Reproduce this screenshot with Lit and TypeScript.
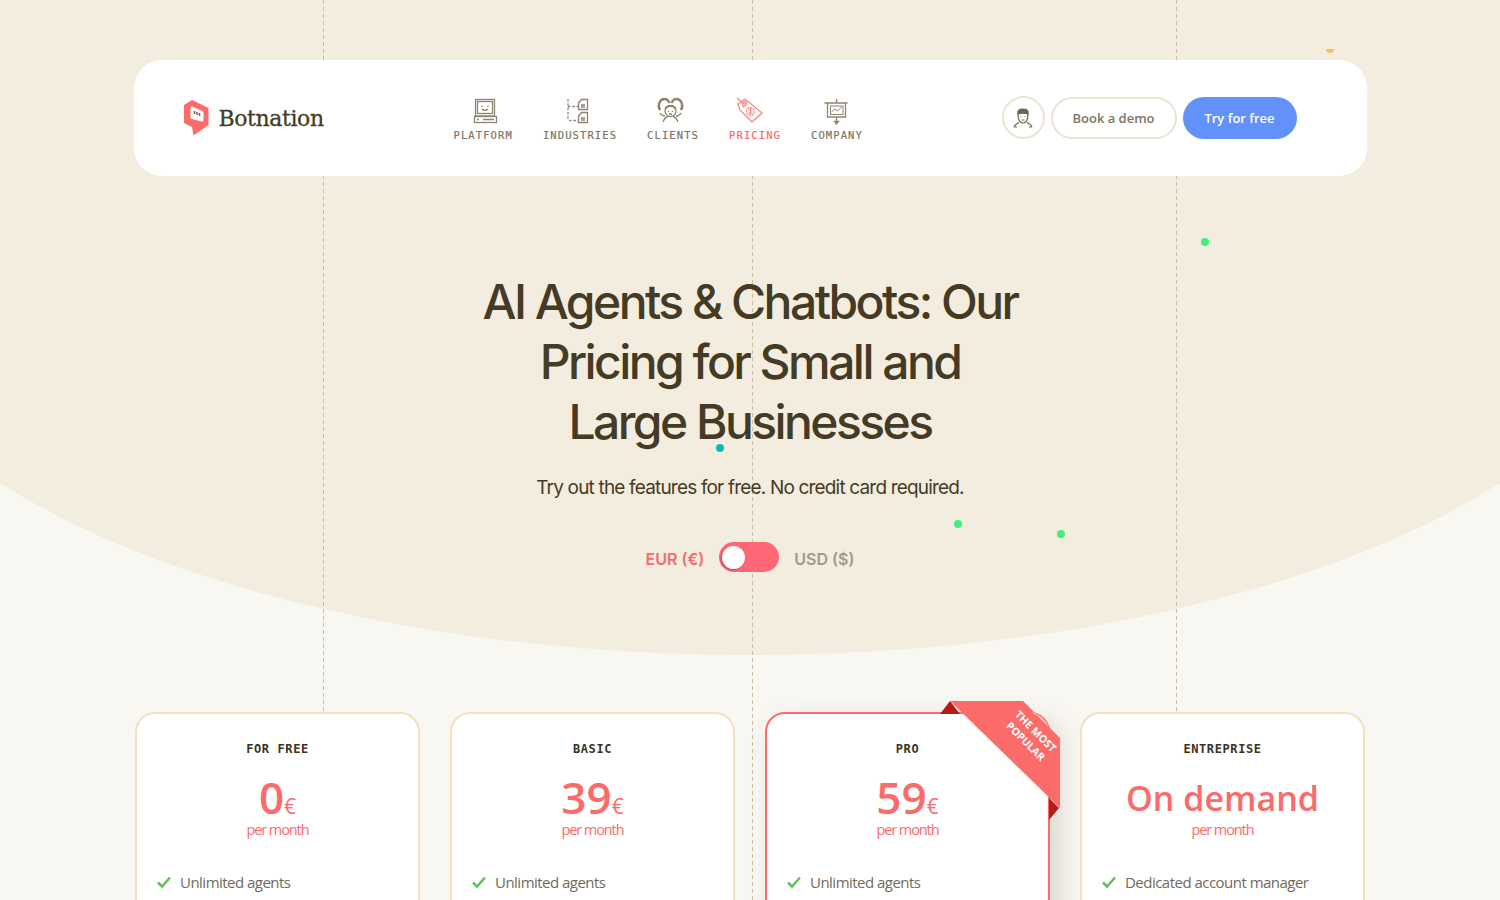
import { LitElement, html, css, svg } from "lit";
import { customElement } from "lit/decorators.js";

const navIcons: Record<string, unknown> = {
  platform: svg`<rect x="8.500" y="3.500" width="19" height="16.500"/><rect x="10.500" y="5.500" width="15" height="12"/><path d="M15 9.500v1.500M21 9.500v1.500M15 13c1.500 1.800 4.500 1.800 6 0"/><rect x="7.500" y="20.500" width="22" height="6"/><path d="M10 23.500h2M16 23.500h11"/>`,
  industries: svg`<path stroke-dasharray="2.500 1.800" d="M4 3v19c0 1.500 1 2.500 2.500 2.500h7.500M4 10.500h10"/><path d="M14.500 7l3-3.500h6v10h-9zM14.500 20l3-3.500h6v10h-9z"/><path d="M17 9h4M17 11h4M17 22h4M17 24h4"/>`,
  clients: svg`<path d="M3 14c-3-5 0-11 4.500-11 2.500 0 4 1.500 5 4" stroke-width="2.400"/><path d="M24 14c3-5 0-11-4.500-11-2.500 0-4 1.500-5 4" stroke-width="2.400"/><path d="M8 20c-2 0-4-1-5-3M19 20c2 0 4-1 5-3"/><circle cx="13.500" cy="15" r="5.500" fill="#fff"/><path d="M8.500 13c1-4 9-4 10 0" stroke-width="2"/><path d="M11.500 15v1M15.500 15v1M12 18h3M6 26c1-3 3-5 5-5.500M21 26c-1-3-3-5-5-5.500"/>`,
  pricing: svg`<path d="M-1 8l7-5 17 14-10 9L1 14z"/><path d="M2 6l5-3.500 2 6-5 4z" fill="#f9a9a9" stroke="none"/><path d="M-2 2l7 6"/><circle cx="11.500" cy="15.500" r="4" stroke-dasharray="2 1"/><path d="M11.500 12v7M9.500 14h4M9.500 17h4" stroke-width="1"/>`,
  company: svg`<path d="M3.500 7h23M15.500 3v4M6.500 7v14h18V7M15.500 21v6"/><path d="M13.500 25.500h4l-2 2.500z"/><rect x="9.500" y="10" width="12.500" height="8.500" stroke-width="1"/><path d="M10.500 16l3.500-3 2.500 2 4-4" stroke-width="1"/>`,
};

const NAV = [
  ["PLATFORM", "platform"],
  ["INDUSTRIES", "industries"],
  ["CLIENTS", "clients"],
  ["PRICING", "pricing"],
  ["COMPANY", "company"],
];

const PLANS = [
  { name: "FOR FREE", price: "0", cur: "€", feat: "Unlimited agents", pro: false },
  { name: "BASIC", price: "39", cur: "€", feat: "Unlimited agents", pro: false },
  { name: "PRO", price: "59", cur: "€", feat: "Unlimited agents", pro: true },
  { name: "ENTREPRISE", price: "On demand", cur: "", feat: "Dedicated account manager", pro: false },
];

const DOTS = [
  { x: 1205, y: 242, c: "#44ee7c" },
  { x: 958, y: 524, c: "#44ee7c" },
  { x: 1061, y: 534, c: "#44ee7c" },
  { x: 720, y: 448, c: "#10b7b7" },
];

@customElement("app-root")
export class AppRoot extends LitElement {
  static styles = css`
    :host {
      display: block;
      position: relative;
      height: 900px;
      overflow: hidden;
      background: #f9f7f2;
      font-family: "Open Sans", sans-serif;
      color: #463c26;
    }
    .top {
      position: absolute;
      left: 0;
      top: 0;
      width: 100%;
      height: 483px;
      background: #f3eddf;
    }
    .ellipse {
      position: absolute;
      left: -150px;
      top: -115px;
      width: 1800px;
      height: 770px;
      border-radius: 50%;
      background: #f3eddf;
    }
    .vline {
      position: absolute;
      top: 0;
      width: 1px;
      background: repeating-linear-gradient(to bottom, #cabfa6 0 4px, transparent 4px 7px);
    }
    .l1 { left: 323px; height: 712px; }
    .l2 { left: 752px; height: 900px; }
    .l3 { left: 1176px; height: 712px; }
    .dot {
      position: absolute;
      width: 8px;
      height: 8px;
      border-radius: 50%;
    }
    .half {
      position: absolute;
      left: 1326px;
      top: 49px;
      width: 8px;
      height: 4px;
      border-radius: 0 0 4px 4px;
      background: #f5c04a;
    }
    .content {
      position: relative;
      display: flex;
      flex-direction: column;
      align-items: center;
    }
    header {
      margin-top: 60px;
      width: 1233px;
      height: 116px;
      box-sizing: border-box;
      padding: 0 70px 0 50px;
      background: #fff;
      border-radius: 28px;
      display: flex;
      align-items: center;
    }
    .logo {
      width: 270px;
      display: flex;
      align-items: center;
      gap: 10px;
    }
    .logo span {
      font-family: "DejaVu Serif", serif;
      font-size: 22px;
      letter-spacing: -0.400px;
      -webkit-text-stroke: 0.300px #463c26;
      color: #463c26;
    }
    nav {
      display: flex;
      gap: 30px;
    }
    .item {
      display: flex;
      flex-direction: column;
      align-items: center;
      gap: 1px;
      font-family: "DejaVu Sans Mono", monospace;
      font-size: 10.500px;
      letter-spacing: 1.100px;
      -webkit-text-stroke: 0.200px currentColor;
      color: #7d7663;
    }
    .item svg {
      width: 32px;
      height: 32px;
      overflow: visible;
      fill: none;
      stroke: #8d8570;
      stroke-width: 1.300;
    }
    .item.active {
      color: #f7696d;
    }
    .item.active svg {
      stroke: #f7898b;
    }
    .actions {
      margin-left: auto;
      display: flex;
      align-items: center;
      gap: 6px;
    }
    .avatar {
      width: 43px;
      height: 43px;
      margin-top: -1px;
      box-sizing: border-box;
      border: 2px solid #ebe4d2;
      border-radius: 50%;
      display: flex;
      align-items: center;
      justify-content: center;
    }
    .avatar svg {
      width: 20px;
      height: 20px;
      fill: none;
      stroke: #6c6655;
      stroke-width: 1.200;
    }
    .btn {
      height: 42px;
      box-sizing: border-box;
      border-radius: 21px;
      display: flex;
      align-items: center;
      justify-content: center;
      font-size: 13px;
      font-weight: 600;
    }
    .ghost {
      width: 126px;
      border: 2px solid #ebe4d2;
      color: #7d7663;
    }
    .primary {
      width: 114px;
      background: #6292f9;
      color: #fff;
    }
    h1 {
      margin: 96px 0 0;
      width: 600px;
      text-align: center;
      font-family: Inter, sans-serif;
      font-size: 48px;
      line-height: 60px;
      font-weight: 500;
      letter-spacing: -2.550px;
      color: #453b25;
    }
    .sub {
      margin: 21px 0 0;
      font-family: Inter, sans-serif;
      font-size: 19px;
      line-height: 30px;
      letter-spacing: -0.820px;
      color: #453b25;
    }
    .toggle-row {
      margin-top: 39px;
      display: flex;
      align-items: center;
      gap: 15px;
      font-family: Inter, sans-serif;
      font-size: 16px;
      font-weight: 600;
      color: #a09a8c;
    }
    .toggle-row span {
      padding-top: 4px;
    }
    .toggle-row .on {
      color: #f7696d;
    }
    .switch {
      width: 60px;
      height: 30px;
      border-radius: 15px;
      background: #ff6676;
      display: flex;
      align-items: center;
      padding-left: 3px;
      box-sizing: border-box;
    }
    .knob {
      width: 23px;
      height: 23px;
      border-radius: 50%;
      background: #fff;
      box-shadow: -1px 1px 2px rgba(150, 40, 60, 0.5);
    }
    .cards {
      margin-top: 140px;
      display: grid;
      grid-template-columns: repeat(4, 285px);
      gap: 30px;
    }
    .card {
      position: relative;
      box-sizing: border-box;
      height: 300px;
      border: 2px solid #f0e2bd;
      border-radius: 20px;
      background: #fff;
      padding: 27px 20px 0;
      display: flex;
      flex-direction: column;
      align-items: center;
    }
    .card.pro {
      border-color: #fb6b69;
      box-shadow: 10px 10px 26px rgba(80, 70, 40, 0.18);
    }
    .name {
      font-family: "DejaVu Sans Mono", monospace;
      font-size: 12px;
      line-height: 16px;
      font-weight: 700;
      letter-spacing: 0.600px;
      color: #3a3322;
    }
    .price {
      margin-top: 16px;
      display: flex;
      align-items: baseline;
      height: 48px;
      font-size: 44px;
      line-height: 48px;
      font-weight: 600;
      color: #fb6b69;
    }
    .price.wide {
      font-size: 34px;
      padding-top: 1px;
      height: 47px;
    }
    .price small {
      font-size: 21px;
      font-weight: 500;
    }
    .per {
      font-size: 14.500px;
      line-height: 18px;
      letter-spacing: -1.100px;
      color: #fb6b69;
    }
    .feat {
      margin-top: 33px;
      align-self: flex-start;
      display: flex;
      align-items: center;
      gap: 9px;
      font-size: 15px;
      letter-spacing: -0.520px;
      color: #6f6a5a;
    }
    .feat svg {
      width: 14px;
      height: 12px;
      fill: none;
      stroke: #66c060;
      stroke-width: 2.600;
    }
    .ribbon {
      position: absolute;
      left: 173px;
      top: -13px;
      width: 122px;
      height: 122px;
    }
    .ribbon text {
      font-family: "Open Sans", sans-serif;
      font-size: 10.500px;
      font-weight: 700;
      fill: #fff;
      text-anchor: middle;
    }
  `;

  render() {
    return html`
      <div class="top"></div>
      <div class="ellipse"></div>
      <div class="vline l1"></div>
      <div class="vline l2"></div>
      <div class="vline l3"></div>
      ${DOTS.map(
        (d) =>
          html`<div class="dot" style="left:${d.x - 4}px;top:${d.y - 4}px;background:${d.c}"></div>`
      )}
      <div class="half"></div>
      <div class="content">
        <header>
          <div class="logo">
            <svg width="25" height="36" viewBox="0 0 25 36">
              <path d="M0 5L8 0l16.500 8v17L9.500 35.500 8 27 0 23z" fill="#fb6b69" />
              <path d="M8 6.500l10 4.500c1 .5 1.500 1 1.500 2v7c0 1.500-1 2-2 1.500L8 19c-1-.3-1.500-1-1.500-2V8c0-1 .5-1.800 1.500-1.500z" fill="#fff" />
              <path d="M10.500 11v3M13 12v3M15.500 13v3" stroke="#7d5b52" stroke-width="1.500" />
            </svg>
            <span>Botnation</span>
          </div>
          <nav>
            ${NAV.map(
              ([label, key]) => html`
                <div class="item ${label === "PRICING" ? "active" : ""}">
                  <svg viewBox="0 0 32 32">${navIcons[key]}</svg>
                  ${label}
                </div>
              `
            )}
          </nav>
          <div class="actions">
            <div class="avatar">
              <svg viewBox="0 0 20 20">
                <path d="M5 6c-1-4 2-5 5-5s6 1 5 5c-3-1-7-1-10 0z" fill="#6c6655" />
                <path d="M5 5.500c0 7 2 9.500 5 9.500s5-2.500 5-9.500" />
                <path d="M8 8.500v.8M12 8.500v.8M8.500 12h3M1 19c1-2.500 3-3 5-4.500M19 19c-1-2.500-3-3-5-4.500M1 19h3M16 19h3" />
              </svg>
            </div>
            <div class="btn ghost">Book a demo</div>
            <div class="btn primary">Try for free</div>
          </div>
        </header>
        <h1>AI Agents &amp; Chatbots: Our<br />Pricing for Small and<br />Large Businesses</h1>
        <p class="sub">Try out the features for free. No credit card required.</p>
        <div class="toggle-row">
          <span class="on">EUR (€)</span>
          <div class="switch"><div class="knob"></div></div>
          <span>USD ($)</span>
        </div>
        <div class="cards">
          ${PLANS.map(
            (p) => html`
              <div class="card ${p.pro ? "pro" : ""}">
                ${p.pro
                  ? html`<svg class="ribbon" viewBox="0 0 122 122">
                      <path d="M0 13l10-13 10 13z" fill="#b81a1a" />
                      <path d="M109 97l10 10-10 12z" fill="#b81a1a" />
                      <path d="M10 0h73l37 37v70z" fill="#fb6b69" />
                      <path d="M93 12c6 2 11 6 15 13" fill="none" stroke="#ffc9c0" stroke-width="1" />
                      <text transform="translate(93 33) rotate(45)">THE MOST</text>
                      <text transform="translate(83 43) rotate(45)">POPULAR</text>
                    </svg>`
                  : ""}
                <div class="name">${p.name}</div>
                <div class="price ${p.cur ? "" : "wide"}">${p.price}<small>${p.cur}</small></div>
                <div class="per">per month</div>
                <div class="feat">
                  <svg viewBox="0 0 14 12"><path d="M1 6.500l4 4 8-9" /></svg>
                  ${p.feat}
                </div>
              </div>
            `
          )}
        </div>
      </div>
    `;
  }
}
